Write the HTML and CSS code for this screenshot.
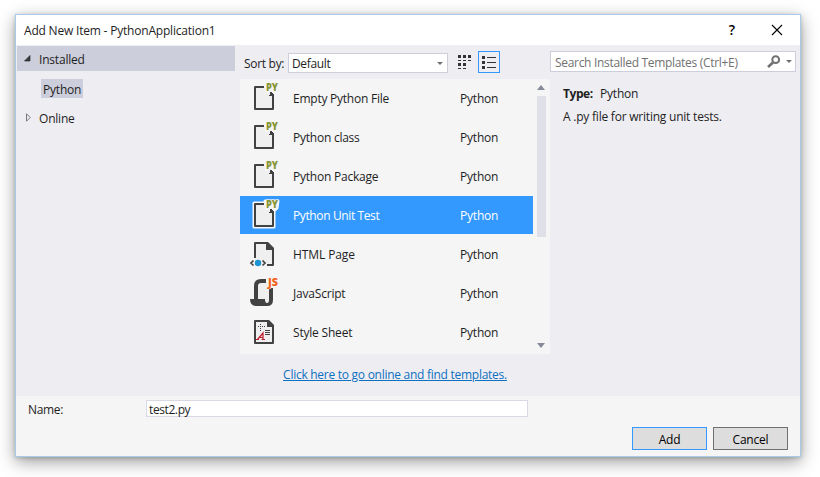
FILE: index.html
```
<!DOCTYPE html>
<html lang="en">
<head>
<meta charset="utf-8">
<title>Add New Item</title>
<link rel="stylesheet" href="styles.css">
</head>
<body>
<div class="dialog">
  <header class="titlebar">
    <span class="title">Add New Item - PythonApplication1</span>
    <span class="help">?</span>
    <svg class="close" width="12" height="12" viewBox="0 0 12 12"><path d="M1 1L11 11M11 1L1 11"/></svg>
  </header>
  <main class="content">
    <nav class="tree">
      <div class="node active"><svg width="7" height="7" viewBox="0 0 7 7"><path d="M6 .5V6H.5Z" fill="#3c3c42" stroke="#1e1e1e" stroke-width=".6"/></svg><span class="installed">Installed</span></div>
      <div class="leaf"><span class="python">Python</span></div>
      <div class="node online-node"><svg width="7" height="9" viewBox="0 0 7 9"><path d="M2.500 .8V8.200L6.200 4.500Z" fill="none" stroke="#77777c"/></svg><span class="online">Online</span></div>
    </nav>
    <section class="center">
      <div class="toolbar">
        <label class="sort">Sort by:</label>
        <div class="select"><span class="default">Default</span><i class="caret"></i></div>
        <svg class="tiles" width="14" height="14" viewBox="0 0 14 14" fill="#333337"><path d="M0 0h3v3H0zM5 0h3v3H5zM10 0h3v3h-3zM0 5h3v1H0zM5 5h3v1H5zM10 5h3v1h-3zM0 8h3v3H0zM5 8h3v3H5zM0 13h3v1H0zM5 13h3v1H5z"/></svg>
        <div class="listview"><svg width="14" height="13" viewBox="0 0 14 13" fill="#333337"><path d="M0 0h3v3H0zM0 5h3v3H0zM0 10h3v3H0zM5 1h9v1H5zM5 6h9v1H5zM5 11h9v1H5z"/></svg></div>
      </div>
      <div class="listbox">
        <div class="rows">
          <div class="row"><svg class="icon" viewBox="0 0 32 32"><path class="paper" d="M7 5H17V11H25V27H7Z"/><path class="ink" d="M16 5H7V27H25V12.500"/><path class="fill" d="M22 10h2v1h1v1h1v2h-5v-1h1z"/><text class="tag tag-py" x="18" y="9" textLength="12" lengthAdjust="spacingAndGlyphs">PY</text></svg><span class="name n1">Empty Python File</span><span class="python">Python</span></div>
          <div class="row"><svg class="icon" viewBox="0 0 32 32"><path class="paper" d="M7 5H17V11H25V27H7Z"/><path class="ink" d="M16 5H7V27H25V12.500"/><path class="fill" d="M22 10h2v1h1v1h1v2h-5v-1h1z"/><text class="tag tag-py" x="18" y="9" textLength="12" lengthAdjust="spacingAndGlyphs">PY</text></svg><span class="name n2">Python class</span><span class="python">Python</span></div>
          <div class="row"><svg class="icon" viewBox="0 0 32 32"><path class="paper" d="M7 5H17V11H25V27H7Z"/><path class="ink" d="M16 5H7V27H25V12.500"/><path class="fill" d="M22 10h2v1h1v1h1v2h-5v-1h1z"/><text class="tag tag-py" x="18" y="9" textLength="12" lengthAdjust="spacingAndGlyphs">PY</text></svg><span class="name n3">Python Package</span><span class="python">Python</span></div>
          <div class="row selected"><svg class="icon" viewBox="0 0 32 32"><path class="halo" d="M6 4H17V2H30L29 9L26 12V28H6Z"/><path class="paper" d="M7 5H17V11H25V27H7Z"/><path class="ink" d="M16 5H7V27H25V12.500"/><path class="fill" d="M22 10h2v1h1v1h1v2h-5v-1h1z"/><text class="tag tag-py" x="18" y="9" textLength="12" lengthAdjust="spacingAndGlyphs">PY</text></svg><span class="name n4">Python Unit Test</span><span class="python">Python</span></div>
          <div class="row"><svg class="icon" viewBox="0 0 32 32"><path class="paper" d="M7 5H19L25 11V27H7Z"/><path class="ink" d="M7 20V5H19L25 11V27H19"/><path class="fill" d="M18 4h2l6 6v2h-8z"/><path d="M5.500 22.500L3 25L5.500 27.500M14.500 22.500L17 25L14.500 27.500" fill="none" stroke="#424242" stroke-width="1.700"/><circle cx="10" cy="25" r="3.200" fill="#1b93d2"/></svg><span class="name n5">HTML Page</span><span class="python">Python</span></div>
          <div class="row"><svg class="icon" viewBox="0 0 32 32"><path class="paper" d="M9 22V7L12 5H20V11H22V26H18V22Z"/><path d="M6 22V9Q6 2 13 2H18V6H13Q10 6 10 9V22H17Q17 26 19 26Q21 26 21 23V11H25V23Q25 29 19 29H8Q2 29 2 22Z" fill="#424242"/><text class="tag tag-js" x="20" y="9" textLength="10" lengthAdjust="spacingAndGlyphs">JS</text></svg><span class="name n6">JavaScript</span><span class="python">Python</span></div>
          <div class="row"><svg class="icon" viewBox="0 0 32 32"><path class="paper" d="M7 5H20L25 10V27H7Z"/><path class="ink" d="M7 5H20L25 10V27H7Z"/><path class="fill" d="M19 4h2l5 5v2h-7z"/><path d="M10 10.500H17M12.500 8V16" fill="none" stroke="#424242" stroke-dasharray="1 1"/><path d="M17 14.500H22M17 16.500H22M17 18.500H22" stroke="#424242"/><path d="M9.500 23.500L15 17V23.500M11.500 21.500H15M8 23.500H11M13.500 23.500H17" fill="none" stroke="#bd1e2d" stroke-width="1.200"/></svg><span class="name n7">Style Sheet</span><span class="python">Python</span></div>
        </div>
        <div class="scrollbar"><i class="up"></i><i class="thumb"></i><i class="down"></i></div>
      </div>
      <div class="more"><a>Click here to go online and find templates.</a></div>
    </section>
    <aside class="details">
      <div class="search"><span>Search Installed Templates (Ctrl+E)</span><svg width="14" height="13" viewBox="0 0 14 13" fill="none" stroke="#717171"><circle cx="8.700" cy="4.700" r="3.400" stroke-width="2"/><path d="M6 7.500L1 12" stroke-width="2.600"/></svg><i class="caret"></i></div>
      <p class="type"><b>Type:</b><span class="python">Python</span></p>
      <p class="desc">A .py file for writing unit tests.</p>
    </aside>
  </main>
  <footer class="footer">
    <div class="field"><label>Name:</label><div class="input"><span>test2.py</span></div></div>
    <div class="buttons"><button class="primary">Add</button><button class="cancel">Cancel</button></div>
  </footer>
</div>
</body>
</html>
```
FILE: styles.css
```
* { box-sizing: border-box; }
body { margin: 0; width: 820px; height: 477px; overflow: hidden; padding: 14px 0 0 15px; background: #fff; color: #1e1e1e; font: 12px/16px "Open Sans", "Noto Sans", sans-serif; letter-spacing: -.2px; white-space: nowrap; }
p { margin: 0; }
svg { display: block; flex: none; }
.dialog { width: 786px; height: 443px; border: 1px solid #a9cbea; background: #eeedf2; box-shadow: 0 5px 16px rgba(0,0,0,.38), 0 1px 4px rgba(0,0,0,.18); display: flex; flex-direction: column; }
.titlebar { height: 30px; flex: none; background: #fff; display: flex; align-items: center; padding: 0 17px 0 8px; }
.title { flex: 1; padding-top: 1px; }
.help { font-size: 14px; font-weight: 600; color: #000; margin-right: 36px; }
.close path { stroke: #000; fill: none; stroke-width: 1.1; }
.content { height: 351px; flex: none; display: grid; grid-template-columns: 219px 310px 246px; }
.tree { padding: 1px 0 0 1px; }
.node { height: 25px; display: flex; align-items: center; padding-left: 7px; gap: 8px; }
.node span { padding-top: 3px; }
.online-node { height: 23px; }
.active { background: #cccedb; }
.leaf { padding: 8px 0 0 24px; height: 35px; }
.leaf span { display: block; width: 42px; height: 19px; line-height: 21px; padding-left: 2px; background: #cccedb; }
.center { margin-left: 5px; width: 310px; }
.toolbar { height: 34px; display: flex; align-items: flex-start; padding: 6px 0 0 4px; }
.sort { width: 44px; padding-top: 5px; letter-spacing: -.3px; }
.select { width: 160px; height: 20px; margin-top: 2px; border: 1px solid #cccedb; background: #fff; display: flex; align-items: center; justify-content: space-between; padding: 0 4px 0 3px; }
.default { padding-top: 2px; letter-spacing: -.35px; }
.caret { width: 0; height: 0; border: 3px solid transparent; border-top-color: #717171; border-bottom: 0; }
.tiles { margin: 4px 6px 0 10px; }
.listview { width: 22px; height: 22px; border: 1px solid #3399ff; display: grid; place-items: center; }
.listbox { height: 275px; background: #f5f5f5; display: flex; gap: 4px; }
.rows { width: 293px; display: flex; flex-direction: column; gap: 1px; }
.row { height: 38px; display: flex; align-items: center; padding-left: 8px; }
.row span { padding-top: 2px; }
.selected { background: #3399ff; color: #fff; }
.icon { width: 32px; height: 32px; margin-right: 13px; }
.name { width: 167px; }
.n1 { letter-spacing: -.24px; }
.n2 { letter-spacing: -.24px; }
.n3 { letter-spacing: -.22px; }
.n4 { letter-spacing: -.38px; }
.n5 { letter-spacing: -.1px; }
.halo { fill: #f5f5f5; stroke: #f5f5f5; stroke-width: 3; stroke-linejoin: round; }
.paper { fill: #efeff0; }
.ink { fill: none; stroke: #424242; stroke-width: 2; stroke-linejoin: round; }
.fill { fill: #424242; }
.tag { font-family: "Open Sans", sans-serif; font-weight: 800; letter-spacing: 0; stroke-width: 1px; stroke: #f5f5f5; paint-order: stroke; }
.tag-py { font-size: 10px; fill: #879636; }
.tag-js { font-size: 10px; fill: #f16421; }
.scrollbar { width: 9px; display: flex; flex-direction: column; padding: 6px 0; }
.up, .down { width: 0; height: 0; border: 4.5px solid transparent; }
.up { border-bottom: 5px solid #868999; border-top: 0; }
.down { border-top: 5px solid #868999; border-bottom: 0; margin-top: auto; }
.thumb { height: 141px; margin-top: 6px; background: #dedfe7; }
.more { text-align: center; padding: 13px 0 0; letter-spacing: -.27px; }
.more a { color: #0e70c0; text-decoration: underline; }
.details { padding-top: 6px; margin-left: 5px; width: 246px; }
.search { height: 21px; border: 1px solid #cccedb; background: #fff; color: #717171; display: flex; align-items: center; padding: 0 3px 0 4px; letter-spacing: -.31px; }
.search span { flex: 1; padding-top: 3px; }
.search svg { margin-right: 5px; }
.type { margin: 14px 0 0 13px; display: flex; }
.type b { width: 37px; letter-spacing: -.45px; }
.desc { margin: 7px 0 0 13px; letter-spacing: -.22px; }
.footer { flex: 1; background: #f5f5f5; padding: 4px 12px 0; }
.field { display: flex; height: 17px; }
.field label { width: 118px; padding-top: 2px; letter-spacing: -.35px; }
.input { width: 382px; height: 17px; border: 1px solid #d9d9e6; background: #fff; padding-left: 2px; line-height: 17px; letter-spacing: -.4px; }
.buttons { display: flex; justify-content: flex-end; gap: 6px; margin-top: 10px; }
button { width: 75px; height: 23px; padding: 3px 0 0; border: 1px solid #707070; background: #ddd; color: #000; font: inherit; letter-spacing: inherit; }
.primary { border-color: #3399ff; }
```
